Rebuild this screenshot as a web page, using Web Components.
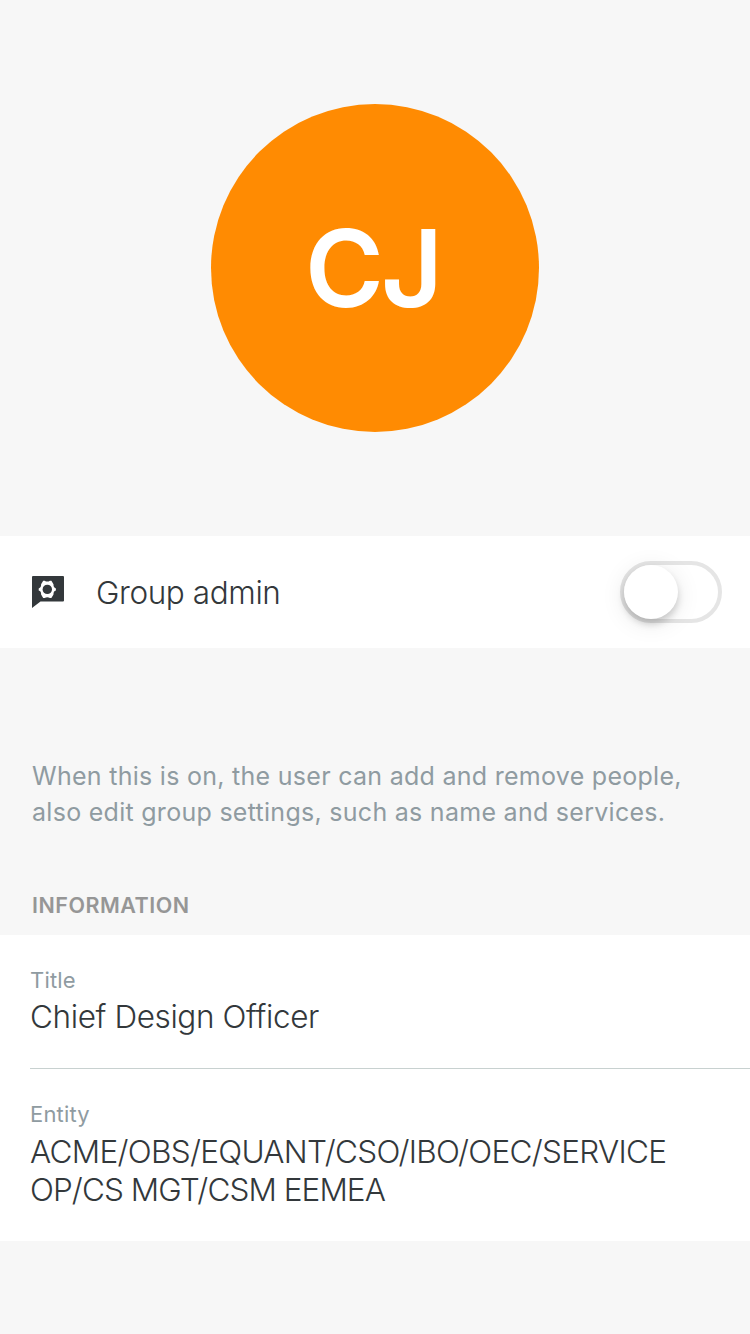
<!DOCTYPE html>
<html lang="en">
<head>
<meta charset="utf-8">
<title>Member profile</title>
<style>
body { margin: 0; background: #f7f7f7; font-family: Inter, "Liberation Sans", sans-serif; color: #33383b; }
</style>
</head>
<body>
<member-page></member-page>
<script>
class ShadowElement extends HTMLElement {
  constructor() {
    super();
    this.attachShadow({ mode: "open" }).innerHTML = this.constructor.markup;
  }
}

customElements.define("member-avatar", class extends ShadowElement {
  static markup = `<style>
    :host { display: flex; align-items: center; justify-content: center; height: 536px; }
    .disc { box-sizing: border-box; width: 328px; height: 328px; border-radius: 50%; background: #ff8b02; color: #fff;
      display: flex; align-items: center; justify-content: center;
      font-size: 107px; font-weight: 600; line-height: 130px; letter-spacing: -3px; padding: 0 5px 0 0; }
  </style><div class="disc"><slot></slot></div>`;
});

customElements.define("admin-icon", class extends ShadowElement {
  static markup = `<style>
    :host { display: block; width: 32px; height: 32px; }
    svg { display: block; }
  </style>
  <svg width="32" height="32" viewBox="0 0 32 32">
    <path fill="#33383b" d="M1 0H31a1 1 0 0 1 1 1V24.500a1 1 0 0 1-1 1H8.500L0 32V1a1 1 0 0 1 1-1Z"/>
    <path fill="#fff" d="M11.200 4.700H12.700Q15.300 6.400 17.900 4.700H19.400L21.500 8.300Q21.300 11.800 23.900 12.400V14.400Q21.300 15 21.500 18.500L19.400 22.100H17.900Q15.300 20.400 12.700 22.100H11.200L9.100 18.500Q9.300 15 6.700 14.400V12.400Q9.300 11.800 9.100 8.300Z"/>
    <circle cx="15.300" cy="13.400" r="4.700" fill="#33383b"/>
  </svg>`;
});

customElements.define("toggle-switch", class extends ShadowElement {
  static markup = `<style>
    :host { display: block; box-sizing: border-box; width: 102px; height: 62px; border: 4px solid #e5e5e5; border-radius: 31px; background: #fff; }
    .knob { width: 54px; height: 54px; border-radius: 50%; background: #fff;
      box-shadow: 0 5px 7px rgba(0,0,0,.17), 0 4px 24px rgba(0,0,0,.1); }
  </style><div class="knob"></div>`;
});

customElements.define("setting-row", class extends ShadowElement {
  static markup = `<style>
    :host { display: flex; align-items: center; box-sizing: border-box; height: 112px; padding: 0 28px 0 32px; background: #fff; }
    .label { flex: 1; margin-left: 32px; padding-top: 1px; font-size: 31.500px; font-weight: 300; line-height: 40px; white-space: nowrap; letter-spacing: -.4px; }
  </style><slot name="icon"></slot><span class="label"><slot></slot></span><slot name="control"></slot>`;
});

customElements.define("help-text", class extends ShadowElement {
  static markup = `<style>
    :host { display: block; padding: 110px 32px 0; font-size: 25px; line-height: 36px; color: #8f9ba1; white-space: nowrap; letter-spacing: .28px; }
  </style><slot></slot>`;
});

customElements.define("section-heading", class extends ShadowElement {
  static markup = `<style>
    :host { display: block; box-sizing: border-box; height: 105px; padding: 62px 32px 0; font-size: 21.500px; font-weight: 600; line-height: 26px; color: #969696; letter-spacing: .5px; }
  </style><slot></slot>`;
});

customElements.define("info-list", class extends ShadowElement {
  static markup = `<style>
    :host { display: block; background: #fff; padding-left: 30px; }
  </style><slot></slot>`;
});

customElements.define("info-item", class extends ShadowElement {
  static markup = `<style>
    :host { display: block; box-sizing: border-box; padding-top: 31px; height: var(--height); }
    :host([divided]) { border-bottom: 1px solid #c8d1d0; }
    .name { font-size: 22px; line-height: 28px; color: #8f9ba1; letter-spacing: .2px; }
    .value { margin-top: var(--gap, 4px); font-size: 31.500px; font-weight: 300; line-height: 38px; white-space: nowrap; }
  </style><div class="name"><slot name="name"></slot></div><div class="value"><slot></slot></div>`;
});

customElements.define("member-page", class extends ShadowElement {
  static markup = `<style>
    :host { display: block; min-height: 1334px; background: #f7f7f7; }
    #title { --height: 134px; }
    #entity { --height: 172px; --gap: 5px; }
    .job { letter-spacing: -.4px; }
    .unit { letter-spacing: -.7px; }
    .unit + br + .unit { letter-spacing: -.92px; }
  </style>
  <member-avatar>CJ</member-avatar>
  <setting-row><admin-icon slot="icon"></admin-icon>Group admin<toggle-switch slot="control"></toggle-switch></setting-row>
  <help-text>When this is on, the user can add and remove people,<br>also edit group settings, such as name and services.</help-text>
  <section-heading>INFORMATION</section-heading>
  <info-list>
    <info-item id="title" divided><span slot="name">Title</span><span class="job">Chief Design Officer</span></info-item>
    <info-item id="entity"><span slot="name">Entity</span><span class="unit">ACME/OBS/EQUANT/CSO/IBO/OEC/SERVICE</span><br><span class="unit">OP/CS MGT/CSM EEMEA</span></info-item>
  </info-list>`;
});
</script>
</body>
</html>
